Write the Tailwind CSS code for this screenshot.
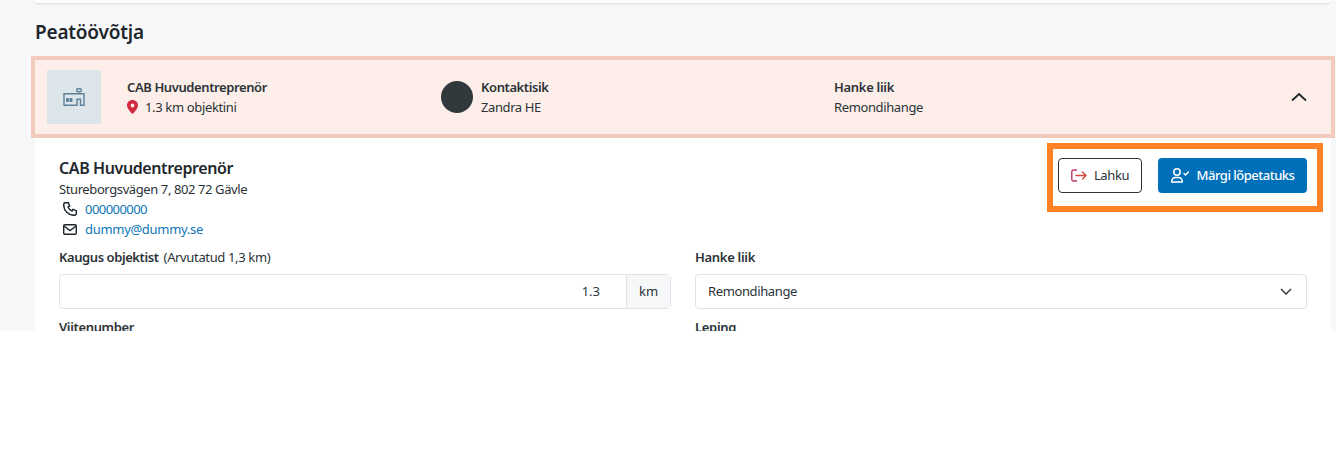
<!DOCTYPE html>
<html lang="et">
<head>
  <meta charset="UTF-8">
  <title>Peatöövõtja</title>
  <script src="https://cdn.jsdelivr.net/npm/@tailwindcss/browser@4"></script>
</head>
<body class="bg-white font-['Noto_Sans','Open_Sans',sans-serif] text-[13px] text-[#2b3338]">
  <div class="h-[331px] overflow-hidden bg-[#f7f8fa]">
    <!-- previous card, only its bottom edge shows -->
    <div class="ml-[35px] mr-[5px] h-[3px] rounded-b bg-white shadow-[0_1px_2px_rgba(0,0,0,0.12)]"></div>

    <h2 class="ml-[35px] mt-[16px] h-[26px] text-[19px] leading-[26px] font-semibold tracking-[-0.2px] text-[#1f272c]">Peatöövõtja</h2>

    <!-- header row -->
    <div class="ml-[31px] mr-[1px] mt-[11px] flex h-[82px] items-center border-[4px] border-[#f3cbbd] bg-[#fdeee9]">
      <div class="ml-[12px] flex h-[54px] w-[54px] items-center justify-center bg-[#dce5e9]">
        <svg width="22" height="18" viewBox="0 0 22 18" fill="none" stroke="#5d8299" stroke-width="1.400">
          <rect x="13.700" y="0.700" width="4.600" height="3" rx="1.200"/>
          <path d="M1 5.700h20v11.600h-3.500v-6h-3.500v6H1z"/>
          <path d="M3.500 10.500h2v3h-2zM7 10.500h2v3H7z" fill="#5d8299" stroke-width="1"/>
        </svg>
      </div>
      <div class="ml-[26px] w-[314px]">
        <div class="h-[20px] font-semibold leading-[20px] tracking-[-0.4px]">CAB Huvudentreprenör</div>
        <div class="flex h-[20px] items-center leading-[20px] tracking-[-0.35px]">
          <svg class="mr-[7px]" width="11" height="14" viewBox="0 0 11 14"><path fill="#d3293f" fill-rule="evenodd" d="M5.500 0C2.400 0 0 2.400 0 5.400 0 8.800 5.500 14 5.500 14S11 8.800 11 5.400C11 2.400 8.600 0 5.500 0zm0 3.600a1.900 1.900 0 1 1 0 3.800 1.900 1.900 0 0 1 0-3.800z"/></svg>
          1.3 km objektini
        </div>
      </div>
      <div class="h-[32px] w-[32px] rounded-full bg-[#32393c]"></div>
      <div class="ml-[8px] w-[353px]">
        <div class="h-[20px] font-semibold leading-[20px] tracking-[-0.4px]">Kontaktisik</div>
        <div class="h-[20px] leading-[20px] tracking-[-0.4px]">Zandra HE</div>
      </div>
      <div class="flex-1">
        <div class="h-[20px] font-semibold leading-[20px] tracking-[-0.3px]">Hanke liik</div>
        <div class="h-[20px] leading-[20px] tracking-[-0.38px]">Remondihange</div>
      </div>
      <svg class="mr-[23px]" width="18" height="10" viewBox="0 0 18 10" fill="none" stroke="#1f272c" stroke-width="1.800"><path d="M2 8.500l7-6.500 7 6.500"/></svg>
    </div>

    <!-- details -->
    <div class="relative ml-[35px] mr-[5px] h-[193px] bg-white px-[24px] pt-[19px]">
      <div class="absolute top-[5px] right-[8px] flex h-[69px] w-[276px] items-start border-[6px] border-[#ff8126] pt-[9px] pl-[5px]">
        <button class="flex h-[35px] w-[84px] items-center justify-center gap-[7px] rounded-[4px] border border-[#2b3338] tracking-[-0.4px]">
          <svg width="16" height="13" viewBox="0 0 16 13" fill="none" stroke-width="1.400" stroke-linecap="round"><path stroke="#c2386b" d="M5.500 1H2.300A1.500 1.500 0 0 0 .8 2.500v8A1.500 1.500 0 0 0 2.300 12h3.200"/><path stroke="#d4493f" d="M5 6.500h10M11.500 3 15 6.500 11.500 10"/></svg>
          Lahku
        </button>
        <button class="ml-[16px] flex h-[35px] w-[149px] items-center justify-center gap-[8px] rounded-[4px] bg-[#0070ba] font-medium tracking-[-0.5px] text-white">
          <svg width="18" height="15" viewBox="0 0 18 15" fill="none" stroke="white" stroke-width="1.500" stroke-linecap="round"><circle cx="6" cy="4" r="3.200"/><path d="M.8 14v-1A3.500 3.500 0 0 1 4.300 9.500h3.400A3.500 3.500 0 0 1 11.200 13v1zM13 5.500l1.500 1.500 3-3"/></svg>
          Märgi lõpetatuks
        </button>
      </div>

      <div class="h-[22px] text-[16px] font-semibold leading-[22px] tracking-[-0.4px] text-[#1f272c]">CAB Huvudentreprenör</div>
      <div class="h-[20px] leading-[20px] tracking-[-0.4px]">Stureborgsvägen 7, 802 72 Gävle</div>
      <div class="flex h-[20px] items-center pl-[4px] leading-[20px] tracking-[-0.55px] text-[#0f76b8]">
        <svg class="mr-[8px]" width="14" height="14" viewBox="1 1 21 21" fill="none" stroke="#1f272c" stroke-width="2.200"><path d="M5 2h4l2 5-2.500 1.500a11 11 0 0 0 6 6L16 12l5 2v4a3 3 0 0 1-3 3A16 16 0 0 1 2 5a3 3 0 0 1 3-3"/></svg>
        000000000
      </div>
      <div class="flex h-[20px] items-center pl-[4px] leading-[20px] tracking-[-0.3px] text-[#0f76b8]">
        <svg class="mr-[8px]" width="14" height="11" viewBox="0 0 14 11" fill="none" stroke="#1f272c" stroke-width="1.400"><rect x="0.700" y="0.700" width="12.600" height="9.600" rx="1.200"/><path d="m1 2 6 4.500L13 2"/></svg>
        dummy@dummy.se
      </div>

      <div class="mt-[8px] grid grid-cols-[612px_612px] gap-x-[24px]">
        <div>
          <div class="h-[20px] leading-[20px] tracking-[-0.35px]"><span class="mr-[2px] font-semibold tracking-[-0.42px]">Kaugus objektist</span> (Arvutatud 1,3 km)</div>
          <div class="mt-[7px] flex h-[35px] rounded-[4px] border border-[#e0e3e8]">
            <div class="flex-1 pr-[26px] text-right leading-[33px]">1.3</div>
            <div class="w-[44px] border-l border-[#e0e3e8] bg-[#f6f7f9] text-center leading-[33px]">km</div>
          </div>
          <div class="mt-[8px] h-[20px] font-semibold leading-[20px] tracking-[-0.35px]">Viitenumber</div>
        </div>
        <div>
          <div class="h-[20px] font-semibold leading-[20px] tracking-[-0.3px]">Hanke liik</div>
          <div class="mt-[7px] flex h-[35px] items-center justify-between rounded-[4px] border border-[#e0e3e8] pr-[14px] pl-[12px] tracking-[-0.38px]">
            Remondihange
            <svg width="12" height="7" viewBox="0 0 12 7" fill="none" stroke="#2b3338" stroke-width="1.400"><path d="m1 1 5 5 5-5"/></svg>
          </div>
          <div class="mt-[8px] h-[20px] font-semibold leading-[20px] tracking-[-0.3px]">Leping</div>
        </div>
      </div>
    </div>
  </div>
</body>
</html>
